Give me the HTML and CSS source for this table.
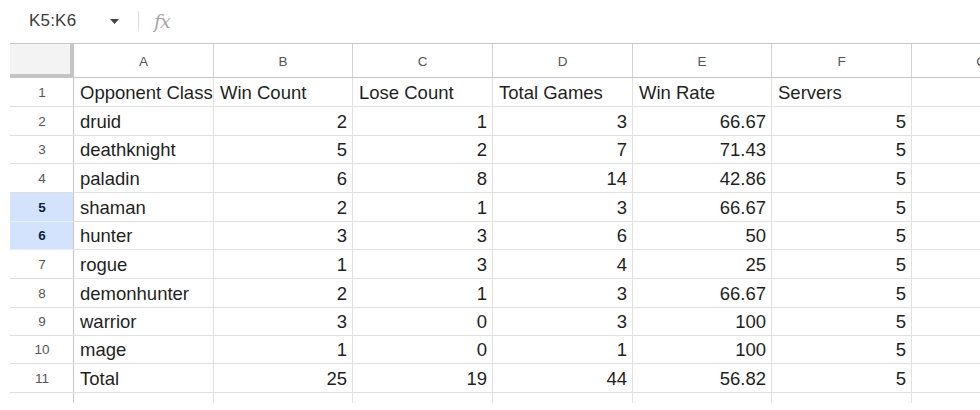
FILE: index.html
```html
<!DOCTYPE html>
<html>
<head>
<meta charset="utf-8">
<link rel="stylesheet" href="styles.css">
</head>
<body>
<div class="sheet">
  <div class="fbar">
    <div class="namebox">K5:K6</div>
    <svg class="caret" width="9" height="5" viewBox="0 0 9 5"><path d="M0 0h9L4.5 5z" fill="#444"/></svg>
    <div class="sep"></div>
    <div class="fx">fx</div>
  </div>
  <div class="grid">
    <div class="corner"></div>
    <div class="ch">A</div><div class="ch">B</div><div class="ch">C</div><div class="ch">D</div><div class="ch">E</div><div class="ch">F</div><div class="ch">G</div>

    <div class="rh">1</div><div class="c">Opponent Class</div><div class="c">Win Count</div><div class="c">Lose Count</div><div class="c">Total Games</div><div class="c">Win Rate</div><div class="c">Servers</div><div class="c"></div>
    <div class="rh">2</div><div class="c">druid</div><div class="c n">2</div><div class="c n">1</div><div class="c n">3</div><div class="c n">66.67</div><div class="c n">5</div><div class="c"></div>
    <div class="rh">3</div><div class="c">deathknight</div><div class="c n">5</div><div class="c n">2</div><div class="c n">7</div><div class="c n">71.43</div><div class="c n">5</div><div class="c"></div>
    <div class="rh">4</div><div class="c">paladin</div><div class="c n">6</div><div class="c n">8</div><div class="c n">14</div><div class="c n">42.86</div><div class="c n">5</div><div class="c"></div>
    <div class="rh sel">5</div><div class="c">shaman</div><div class="c n">2</div><div class="c n">1</div><div class="c n">3</div><div class="c n">66.67</div><div class="c n">5</div><div class="c"></div>
    <div class="rh sel">6</div><div class="c">hunter</div><div class="c n">3</div><div class="c n">3</div><div class="c n">6</div><div class="c n">50</div><div class="c n">5</div><div class="c"></div>
    <div class="rh">7</div><div class="c">rogue</div><div class="c n">1</div><div class="c n">3</div><div class="c n">4</div><div class="c n">25</div><div class="c n">5</div><div class="c"></div>
    <div class="rh">8</div><div class="c">demonhunter</div><div class="c n">2</div><div class="c n">1</div><div class="c n">3</div><div class="c n">66.67</div><div class="c n">5</div><div class="c"></div>
    <div class="rh">9</div><div class="c">warrior</div><div class="c n">3</div><div class="c n">0</div><div class="c n">3</div><div class="c n">100</div><div class="c n">5</div><div class="c"></div>
    <div class="rh">10</div><div class="c">mage</div><div class="c n">1</div><div class="c n">0</div><div class="c n">1</div><div class="c n">100</div><div class="c n">5</div><div class="c"></div>
    <div class="rh">11</div><div class="c">Total</div><div class="c n">25</div><div class="c n">19</div><div class="c n">44</div><div class="c n">56.82</div><div class="c n">5</div><div class="c"></div>
    <div class="rh">12</div><div class="c"></div><div class="c"></div><div class="c"></div><div class="c"></div><div class="c"></div><div class="c"></div><div class="c"></div>
  </div>
</div>
</body>
</html>
```

FILE: styles.css
```css
* { box-sizing: border-box; }
html, body { margin: 0; padding: 0; background: #fff; }
body { font-family: "Liberation Sans", Arial, sans-serif; }

.sheet {
  width: 980px;
  height: 410px;
  padding-left: 10px;
  overflow: hidden;
}

.fbar {
  height: 44px;
  border-bottom: 1px solid #c7c7c7;
  display: flex;
  align-items: center;
  padding-bottom: 1px;
}

.namebox {
  width: 100px;
  padding-left: 19px;
  font-size: 17px;
  color: #3c3c3c;
  letter-spacing: 0.2px;
}

.caret { display: block; margin-top: 1px; }

.sep {
  width: 1px;
  height: 20px;
  background: #dadada;
  margin-left: 19px;
}

.fx {
  margin-left: 15px;
  font-family: "DejaVu Serif", serif;
  font-style: italic;
  font-size: 19px;
  color: #a6a6a6;
  letter-spacing: -1px;
}

.grid {
  display: grid;
  grid-template-columns: 64px 140px 139px 140px 140px 139px 140px 140px;
  grid-template-rows: 34px 29px 29px 28px 29px 29px 28px 29px 29px 28px 28px 29px 29px;
  height: 359px;
  overflow: hidden;
}

.corner {
  background: #f3f3f3;
  border-right: 4px solid #c4c4c4;
  border-bottom: 4px solid #c4c4c4;
}

.ch {
  display: flex;
  align-items: center;
  justify-content: center;
  font-size: 13.5px;
  color: #555;
  border-right: 1px solid #d3d3d3;
  border-bottom: 1px solid #c7c7c7;
  padding-top: 1px;
}

.rh {
  display: flex;
  align-items: center;
  justify-content: center;
  font-size: 13.5px;
  color: #555;
  border-right: 1px solid #c7c7c7;
  border-bottom: 1px solid #dedede;
  padding-left: 1px;
}

.rh.sel {
  background: #d3e3fd;
  color: #0b1f3f;
  font-weight: bold;
  border-bottom-color: #e8eef9;
}

.c {
  display: flex;
  align-items: center;
  padding: 1px 5px 0 6px;
  font-size: 18.5px;
  color: #1f1f1f;
  white-space: nowrap;
  border-right: 1px solid #e1e1e1;
  border-bottom: 1px solid #e1e1e1;
}

.c.n { justify-content: flex-end; }
```
